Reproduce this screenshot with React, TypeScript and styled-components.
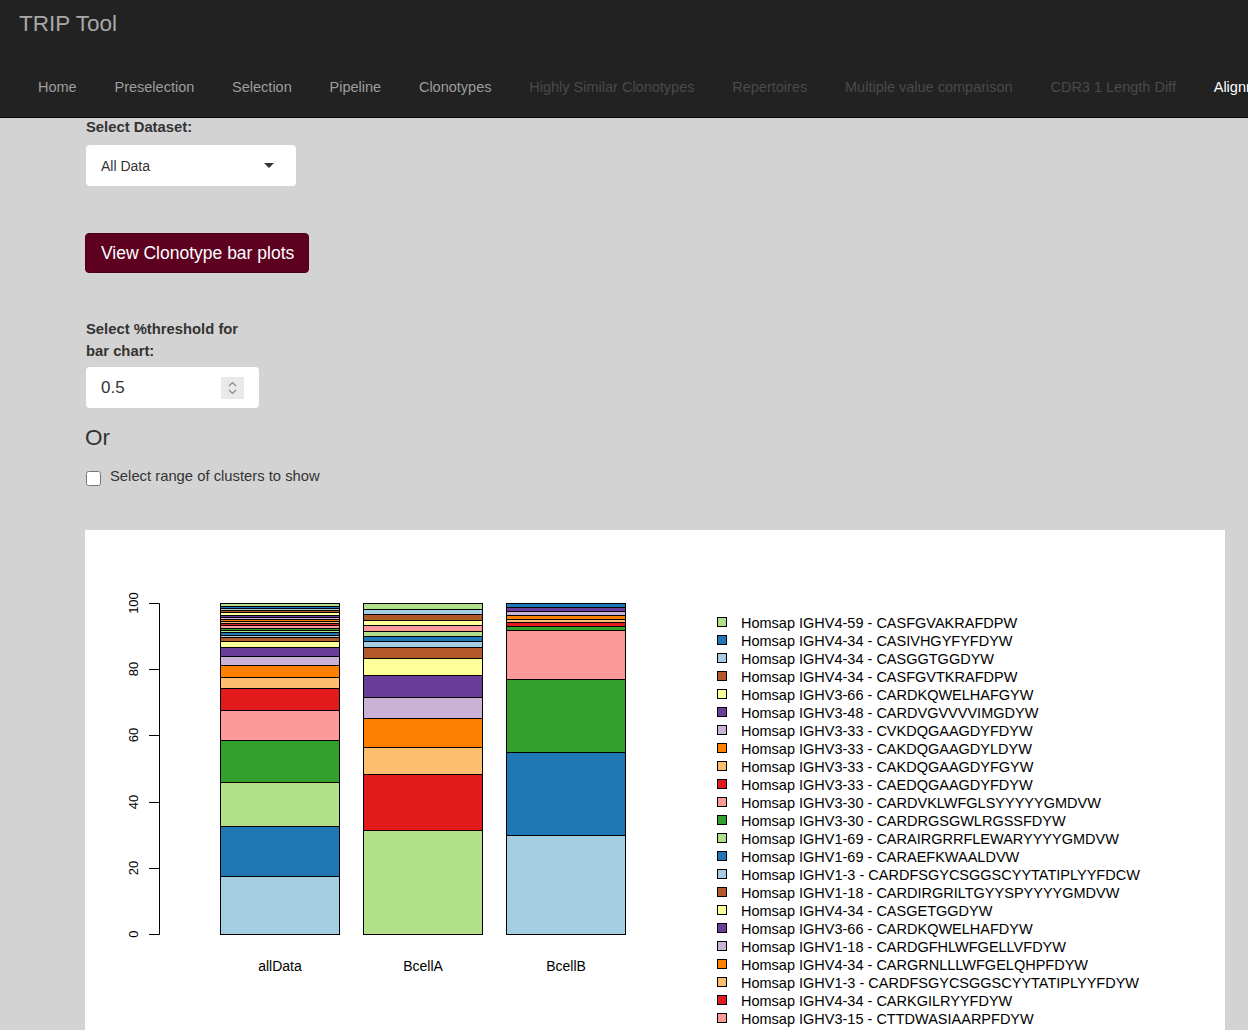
import React from "react";
import styled, { createGlobalStyle } from "styled-components";

const GlobalStyle = createGlobalStyle`
  html, body {
    margin: 0;
    padding: 0;
  }
  body {
    background: #d3d3d3;
    font-family: "Liberation Sans", Arial, sans-serif;
    color: #333;
  }
`;

type NavState = "on" | "off" | "active";

const navItems: { label: string; state: NavState }[] = [
  { label: "Home", state: "on" },
  { label: "Preselection", state: "on" },
  { label: "Selection", state: "on" },
  { label: "Pipeline", state: "on" },
  { label: "Clonotypes", state: "on" },
  { label: "Highly Similar Clonotypes", state: "off" },
  { label: "Repertoires", state: "off" },
  { label: "Multiple value comparison", state: "off" },
  { label: "CDR3 1 Length Diff", state: "off" },
  { label: "Alignment", state: "active" },
];

const palette = [
  "#A6CEE3",
  "#1F78B4",
  "#B2DF8A",
  "#33A02C",
  "#FB9A99",
  "#E31A1C",
  "#FDBF6F",
  "#FF7F00",
  "#CAB2D6",
  "#6A3D9A",
  "#FFFF99",
  "#B15928",
];

// series 0 sits at the bottom of every bar, legend lists them top-down
const clonotypes = [
  "Homsap IGHV1-2 - CARDLGYCSSTSCYDAFDIW",
  "Homsap IGHV3-23 - CAKDRGYSSGWYFDYW",
  "Homsap IGHV4-39 - CARHEGSGSYYNWFDPW",
  "Homsap IGHV3-7 - CARDPGYSYGYFDYW",
  "Homsap IGHV3-15 - CTTDWASIAARPFDYW",
  "Homsap IGHV4-34 - CARKGILRYYFDYW",
  "Homsap IGHV1-3 - CARDFSGYCSGGSCYYTATIPLYYFDYW",
  "Homsap IGHV4-34 - CARGRNLLLWFGELQHPFDYW",
  "Homsap IGHV1-18 - CARDGFHLWFGELLVFDYW",
  "Homsap IGHV3-66 - CARDKQWELHAFDYW",
  "Homsap IGHV4-34 - CASGETGGDYW",
  "Homsap IGHV1-18 - CARDIRGRILTGYYSPYYYYGMDVW",
  "Homsap IGHV1-3 - CARDFSGYCSGGSCYYTATIPLYYFDCW",
  "Homsap IGHV1-69 - CARAEFKWAALDVW",
  "Homsap IGHV1-69 - CARAIRGRRFLEWARYYYYGMDVW",
  "Homsap IGHV3-30 - CARDRGSGWLRGSSFDYW",
  "Homsap IGHV3-30 - CARDVKLWFGLSYYYYYGMDVW",
  "Homsap IGHV3-33 - CAEDQGAAGDYFDYW",
  "Homsap IGHV3-33 - CAKDQGAAGDYFGYW",
  "Homsap IGHV3-33 - CAKDQGAAGDYLDYW",
  "Homsap IGHV3-33 - CVKDQGAAGDYFDYW",
  "Homsap IGHV3-48 - CARDVGVVVVIMGDYW",
  "Homsap IGHV3-66 - CARDKQWELHAFGYW",
  "Homsap IGHV4-34 - CASFGVTKRAFDPW",
  "Homsap IGHV4-34 - CASGGTGGDYW",
  "Homsap IGHV4-34 - CASIVHGYFYFDYW",
  "Homsap IGHV4-59 - CASFGVAKRAFDPW",
];

const bars = [
  {
    name: "allData",
    values: [
      17.5, 15.1, 13, 12.7, 9.1, 6.7, 3.2, 3.6, 2.7, 2.7, 1.8, 1.4, 0.6, 0.7, 0.7, 0.6, 0.8, 0.6, 0.7,
      0.7, 0.6, 0.6, 0.8, 0.6, 0.7, 0.6, 0.8,
    ],
  },
  {
    name: "BcellA",
    values: [
      0, 0, 31.4, 0, 0, 16.9, 8.2, 8.5, 6.6, 6.6, 5.1, 3.3, 1.6, 1.7, 1.6, 0, 1.7, 0, 0, 0, 0, 0, 1.5,
      1.8, 1.5, 0, 1.8,
    ],
  },
  {
    name: "BcellB",
    values: [
      30, 25.1, 0, 22.1, 14.8, 0, 0, 0, 0, 0, 0, 0, 0, 0, 0, 1.2, 0, 1.2, 0.9, 1.2, 1.2, 1.2, 0, 0, 0,
      1.2, 0,
    ],
  },
];

const PLOT_TOP = 73;
const PLOT_BOTTOM = 404;
const AXIS_X = 74;
const BAR_W = 119;
const BAR_X = [135, 278, 421];

const yFor = (pct: number) => PLOT_BOTTOM - (pct / 100) * (PLOT_BOTTOM - PLOT_TOP);

const ClonotypeBarPlot: React.FC = () => {
  const ticks = [0, 20, 40, 60, 80, 100];
  return (
    <svg width={1140} height={600} viewBox="0 0 1140 600">
      <g stroke="#000" strokeWidth={1} fill="none">
        <line x1={AXIS_X + 0.5} y1={PLOT_TOP + 0.5} x2={AXIS_X + 0.5} y2={PLOT_BOTTOM + 0.5} />
        {ticks.map((t) => {
          const y = Math.round(yFor(t)) + 0.5;
          return <line key={t} x1={AXIS_X - 10} y1={y} x2={AXIS_X + 0.5} y2={y} />;
        })}
      </g>
      {ticks.map((t) => {
        const y = Math.round(yFor(t));
        return (
          <text
            key={t}
            x={53}
            y={y}
            fontSize={13}
            textAnchor="middle"
            fill="#000"
            transform={`rotate(-90 53 ${y})`}
          >
            {t}
          </text>
        );
      })}

      {bars.map((bar, bi) => {
        const total = bar.values.reduce((a, b) => a + b, 0);
        let cum = 0;
        const x = BAR_X[bi] + 0.5;
        return (
          <g key={bar.name}>
            {bar.values.map((v, si) => {
              if (v === 0) return null;
              const lo = (cum / total) * 100;
              cum += v;
              const hi = (cum / total) * 100;
              const yTop = Math.round(yFor(hi)) + 0.5;
              const yBot = Math.round(yFor(lo)) + 0.5;
              return (
                <rect
                  key={si}
                  x={x}
                  y={yTop}
                  width={BAR_W}
                  height={yBot - yTop}
                  fill={palette[si % 12]}
                  stroke="#000"
                  strokeWidth={1}
                />
              );
            })}
            <text x={BAR_X[bi] + BAR_W / 2 + 0.5} y={441} fontSize={14} textAnchor="middle" fill="#000">
              {bar.name}
            </text>
          </g>
        );
      })}

      {clonotypes
        .map((name, si) => ({ name, si }))
        .reverse()
        .map(({ name, si }, row) => {
          const cy = 92 + row * 18;
          return (
            <g key={si}>
              <rect
                x={632.5}
                y={cy - 4.5}
                width={9}
                height={9}
                fill={palette[si % 12]}
                stroke="#000"
                strokeWidth={1}
              />
              <text x={656} y={cy + 5.5} fontSize={14.5} fill="#000">
                {name}
              </text>
            </g>
          );
        })}
    </svg>
  );
};

export default function App() {
  return (
    <>
      <GlobalStyle />
      <Header>
        <Brand>TRIP Tool</Brand>
        <NavRow>
          {navItems.map((item) => (
            <NavLink key={item.label} $state={item.state}>
              {item.label}
            </NavLink>
          ))}
        </NavRow>
      </Header>
      <Main>
        <Controls>
          <FieldLabel>Select Dataset:</FieldLabel>
          <SelectBox>
            <span>All Data</span>
            <Caret />
          </SelectBox>
          <ActionButton>View Clonotype bar plots</ActionButton>
          <FieldLabel $narrow $spaced>
            Select %threshold for bar chart:
          </FieldLabel>
          <NumberBox>
            <span>0.5</span>
            <Spinner>
              <svg width="9" height="16" viewBox="0 0 9 16">
                <path d="M1 6 L4.5 2.5 L8 6" stroke="#8a8a8a" strokeWidth="1.2" fill="none" />
                <path d="M1 10 L4.5 13.5 L8 10" stroke="#8a8a8a" strokeWidth="1.2" fill="none" />
              </svg>
            </Spinner>
          </NumberBox>
          <OrHeading>Or</OrHeading>
          <CheckRow>
            <CheckBox type="checkbox" />
            <span>Select range of clusters to show</span>
          </CheckRow>
        </Controls>
        <ChartPanel>
          <ClonotypeBarPlot />
        </ChartPanel>
      </Main>
    </>
  );
}

const Header = styled.header`
  background: #222222;
  border-bottom: 1px solid #080808;
  height: 117px;
  overflow: hidden;
`;

const Brand = styled.div`
  height: 48px;
  line-height: 48px;
  padding-left: 19px;
  font-size: 22.5px;
  color: #a8a8a8;
`;

const NavRow = styled.nav`
  display: flex;
  gap: 37.8px;
  padding: 29px 0 20px 38px;
  white-space: nowrap;
  font-size: 14.5px;
  line-height: 20px;
`;

const NavLink = styled.a<{ $state: NavState }>`
  color: ${(p) => (p.$state === "on" ? "#9d9d9d" : p.$state === "off" ? "#4a4a4a" : "#ffffff")};
  text-decoration: none;
  flex: none;
`;

const Main = styled.main`
  padding: 0 0 40px 85px;
`;

const Controls = styled.div`
  display: flex;
  flex-direction: column;
  align-items: flex-start;
`;

const FieldLabel = styled.label<{ $narrow?: boolean; $spaced?: boolean }>`
  display: block;
  font-size: 14.8px;
  font-weight: bold;
  line-height: ${(p) => (p.$narrow ? "22px" : "19px")};
  max-width: ${(p) => (p.$narrow ? "173px" : "none")};
  margin: ${(p) => (p.$spaced ? "44.5px 0 5.5px 1px" : "0 0 8px 1px")};
  color: #333;
`;

const SelectBox = styled.div`
  box-sizing: border-box;
  width: 210px;
  height: 41px;
  margin-left: 1px;
  padding: 0 22px 0 15px;
  display: flex;
  align-items: center;
  justify-content: space-between;
  background: #fff;
  border-radius: 4px;
  font-size: 14px;
  color: #333;
`;

const Caret = styled.span`
  width: 0;
  height: 0;
  border-left: 5px solid transparent;
  border-right: 5px solid transparent;
  border-top: 5px solid #333;
`;

const ActionButton = styled.button`
  box-sizing: border-box;
  margin-top: 47px;
  width: 224px;
  height: 40px;
  padding: 0 0 0 15px;
  text-align: left;
  background: #5e0020;
  border: 1px solid #4a0019;
  border-radius: 4px;
  color: #fff;
  font-family: "Liberation Sans", Arial, sans-serif;
  font-size: 17.5px;
  cursor: pointer;
`;

const NumberBox = styled.div`
  box-sizing: border-box;
  width: 173px;
  height: 41px;
  margin-left: 1px;
  padding: 0 15px;
  display: flex;
  align-items: center;
  justify-content: space-between;
  background: #fff;
  border-radius: 4px;
  font-size: 17px;
  color: #333;
`;

const Spinner = styled.span`
  width: 23px;
  height: 22px;
  display: flex;
  align-items: center;
  justify-content: center;
  background: #e9e9e9;
`;

const OrHeading = styled.h3`
  margin: 18px 0 0;
  font-size: 22.5px;
  line-height: 24px;
  font-weight: normal;
  color: #333;
`;

const CheckRow = styled.label`
  margin-top: 15.5px;
  display: flex;
  align-items: flex-start;
  gap: 9px;
  font-size: 14.8px;
  line-height: 20px;
  color: #333;
`;

const CheckBox = styled.input`
  width: 15px;
  height: 15px;
  margin: 5px 0 0 1px;
`;

const ChartPanel = styled.section`
  margin-top: 44px;
  width: 1140px;
  background: #fff;
  line-height: 0;
  font-family: "Liberation Sans", Arial, sans-serif;
`;
